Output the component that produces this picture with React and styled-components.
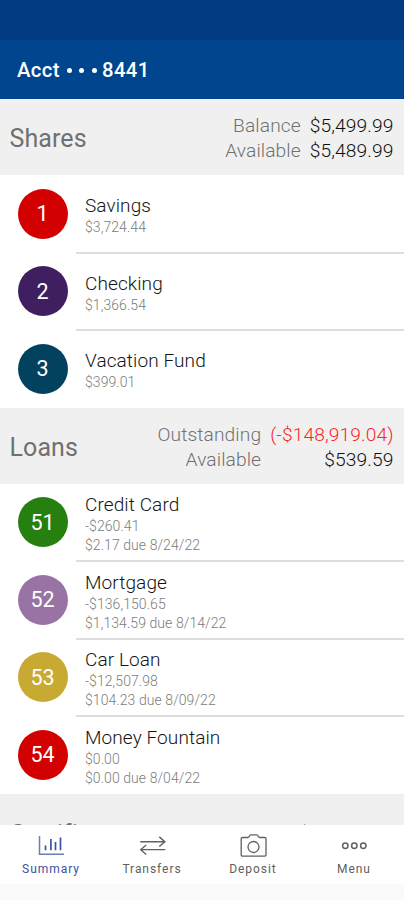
import React from "react";
import styled, { createGlobalStyle } from "styled-components";

const shares = [
  { id: 1, name: "Savings", amount: "$3,724.44", color: "#d20000" },
  { id: 2, name: "Checking", amount: "$1,366.54", color: "#3f1f5f" },
  { id: 3, name: "Vacation Fund", amount: "$399.01", color: "#03425f" },
];

const loans = [
  {
    id: 51,
    name: "Credit Card",
    amount: "-$260.41",
    due: "$2.17 due 8/24/22",
    color: "#25800f",
  },
  {
    id: 52,
    name: "Mortgage",
    amount: "-$136,150.65",
    due: "$1,134.59 due 8/14/22",
    color: "#9973a3",
  },
  {
    id: 53,
    name: "Car Loan",
    amount: "-$12,507.98",
    due: "$104.23 due 8/09/22",
    color: "#c8aa32",
  },
  {
    id: 54,
    name: "Money Fountain",
    amount: "$0.00",
    due: "$0.00 due 8/04/22",
    color: "#d20000",
  },
];

function Section({ title, totals, accounts, headerHeight }) {
  return (
    <section>
      <SectionHeader $height={headerHeight}>
        <SectionTitle>{title}</SectionTitle>
        <Totals>
          {totals.map((total) => (
            <React.Fragment key={total.label}>
              <TotalLabel>{total.label}</TotalLabel>
              <TotalValue $negative={total.negative}>{total.value}</TotalValue>
            </React.Fragment>
          ))}
        </Totals>
      </SectionHeader>
      {accounts.map((account) => (
        <AccountRow key={account.id}>
          <Badge $color={account.color}>{account.id}</Badge>
          <AccountInfo>
            <AccountName>{account.name}</AccountName>
            <AccountDetail>{account.amount}</AccountDetail>
            {account.due && <AccountDetail>{account.due}</AccountDetail>}
          </AccountInfo>
        </AccountRow>
      ))}
    </section>
  );
}

function App() {
  return (
    <Screen>
      <GlobalStyle />
      <StatusBar />
      <TitleBar>
        <span>Acct</span>
        <Dots>
          <Dot />
          <Dot />
          <Dot />
        </Dots>
        <span>8441</span>
      </TitleBar>
      <Content>
        <Section
          title="Shares"
          totals={[
            { label: "Balance", value: "$5,499.99" },
            { label: "Available", value: "$5,489.99" },
          ]}
          accounts={shares}
        />
        <Section
          title="Loans"
          totals={[
            { label: "Outstanding", value: "(-$148,919.04)", negative: true },
            { label: "Available", value: "$539.59" },
          ]}
          accounts={loans}
        />
        <Section
          title="Certificates"
          totals={[{ label: "Balance", value: "$10,000.00" }]}
          accounts={[]}
          headerHeight={78}
        />
      </Content>
      <TabBar>
        <Tab $active>
          <TabIcon viewBox="0 0 28 24">
            <path d="M2.500 2v18.300H27" strokeWidth="1.500" opacity="0.750" />
            <path
              d="M8.500 11.500V16.300M13.900 5v11.300M18.500 8v8.300M23.500 3.500v12.800"
              strokeWidth="1.700"
            />
          </TabIcon>
          <TabLabel>Summary</TabLabel>
        </Tab>
        <Tab>
          <TabIcon viewBox="0 0 28 24">
            <path d="M2.200 7.700H27M21.300 2.900l5.500 4.800-5.500 4.800" strokeWidth="1.500" />
            <path d="M27.300 15.700H3M8.200 10.900l-5.500 4.800 5.500 4.800" />
          </TabIcon>
          <TabLabel>Transfers</TabLabel>
        </Tab>
        <Tab>
          <TabIcon viewBox="0 0 28 24">
            <path d="M3.500 3.500H9q1 0 1.300-1.300Q10.700 0.800 12 0.800h5.500q1.300 0 1.700 1.400 0.300 1.300 1.300 1.300h5.200q1.300 0 1.300 1.300v16q0 1.300-1.300 1.300H3.500q-1.300 0-1.300-1.300v-16Q2.200 3.500 3.500 3.500z" />
            <circle cx="14.500" cy="13" r="5.500" />
          </TabIcon>
          <TabLabel>Deposit</TabLabel>
        </Tab>
        <Tab>
          <TabIcon viewBox="0 0 28 24">
            <circle cx="5.300" cy="11.700" r="2.700" strokeWidth="1.500" />
            <circle cx="14.300" cy="11.700" r="2.700" strokeWidth="1.500" />
            <circle cx="23.300" cy="11.700" r="2.700" strokeWidth="1.500" />
          </TabIcon>
          <TabLabel>Menu</TabLabel>
        </Tab>
      </TabBar>
      <BottomInset />
    </Screen>
  );
}

export default App;

const GlobalStyle = createGlobalStyle`
  * {
    box-sizing: border-box;
  }

  body {
    margin: 0;
    font-family: Roboto, "Liberation Sans", sans-serif;
  }
`;

const Screen = styled.div`
  width: 100%;
  height: 100vh;
  display: flex;
  flex-direction: column;
  overflow: hidden;
  background-color: #ffffff;
`;

const StatusBar = styled.div`
  flex: none;
  height: 40px;
  background-color: #003b83;
`;

const TitleBar = styled.header`
  flex: none;
  height: 59px;
  padding: 1px 17px 0;
  display: flex;
  align-items: center;
  background-color: #00458d;
  color: #ffffff;
  font-size: 20.3px;
  font-weight: 500;
  letter-spacing: 0.4px;
`;

const Dots = styled.div`
  width: 42px;
  padding: 0 5px 0 7px;
  display: flex;
  justify-content: space-between;
`;

const Dot = styled.i`
  width: 5px;
  height: 5px;
  border-radius: 50%;
  background-color: #ffffff;
`;

const Content = styled.main`
  flex: 1;
  min-height: 0;
  overflow: hidden;
`;

const SectionHeader = styled.div`
  height: ${(props) => props.$height || 76}px;
  padding: 2px 10.5px 0 9.5px;
  display: flex;
  align-items: center;
  justify-content: space-between;
  background-color: #f0f0f0;
`;

const SectionTitle = styled.h2`
  margin: 0;
  padding-top: 1px;
  color: #707070;
  font-size: 25px;
  font-weight: 380;
  letter-spacing: 0.1px;
`;

const Totals = styled.div`
  display: grid;
  grid-template-columns: auto auto;
  column-gap: 9px;
  font-size: 19.2px;
  font-weight: 350;
  line-height: 25px;
  letter-spacing: 0.1px;
  text-align: right;
`;

const TotalLabel = styled.span`
  color: #707070;
`;

const TotalValue = styled.span`
  color: ${(props) => (props.$negative ? "#f82828" : "#101010")};
`;

const AccountRow = styled.div`
  height: 77.5px;
  padding-left: 17.5px;
  display: flex;
  align-items: center;
`;

const Badge = styled.div`
  flex: none;
  width: 50px;
  height: 50px;
  margin-right: 8.5px;
  border-radius: 50%;
  display: flex;
  align-items: center;
  justify-content: center;
  background-color: ${(props) => props.$color};
  color: #ffffff;
  font-size: 21.5px;
  font-weight: 450;
`;

const AccountInfo = styled.div`
  flex: 1;
  align-self: flex-start;
  height: calc(100% + 1px);
  padding: 5px 0 0 9px;
  display: flex;
  flex-direction: column;
  justify-content: center;
  border-bottom: 2px solid #dedede;

  ${AccountRow}:last-child & {
    border-bottom-color: transparent;
  }
`;

const AccountName = styled.div`
  color: #141414;
  font-size: 19px;
  font-weight: 350;
  line-height: 24px;
  letter-spacing: 0.1px;
`;

const AccountDetail = styled.div`
  color: #7c7c7c;
  font-size: 14px;
  font-weight: 350;
  line-height: 19px;
  letter-spacing: 0.07px;
`;

const TabBar = styled.nav`
  flex: none;
  height: 59px;
  display: grid;
  grid-template-columns: repeat(4, 1fr);
  background-color: #ffffff;
`;

const Tab = styled.div`
  padding-top: 9px;
  display: flex;
  flex-direction: column;
  align-items: center;
  color: ${(props) => (props.$active ? "#3c529c" : "#606060")};
`;

const TabIcon = styled.svg`
  width: 28px;
  height: 24px;
  fill: none;
  stroke: currentColor;
  stroke-width: 1.3;
`;

const TabLabel = styled.span`
  margin-top: 3px;
  padding-left: 1px;
  font-size: 12px;
  font-weight: 370;
  line-height: 16px;
  letter-spacing: 0.95px;
`;

const BottomInset = styled.div`
  flex: none;
  height: 16px;
  background-color: #fafafa;
`;
